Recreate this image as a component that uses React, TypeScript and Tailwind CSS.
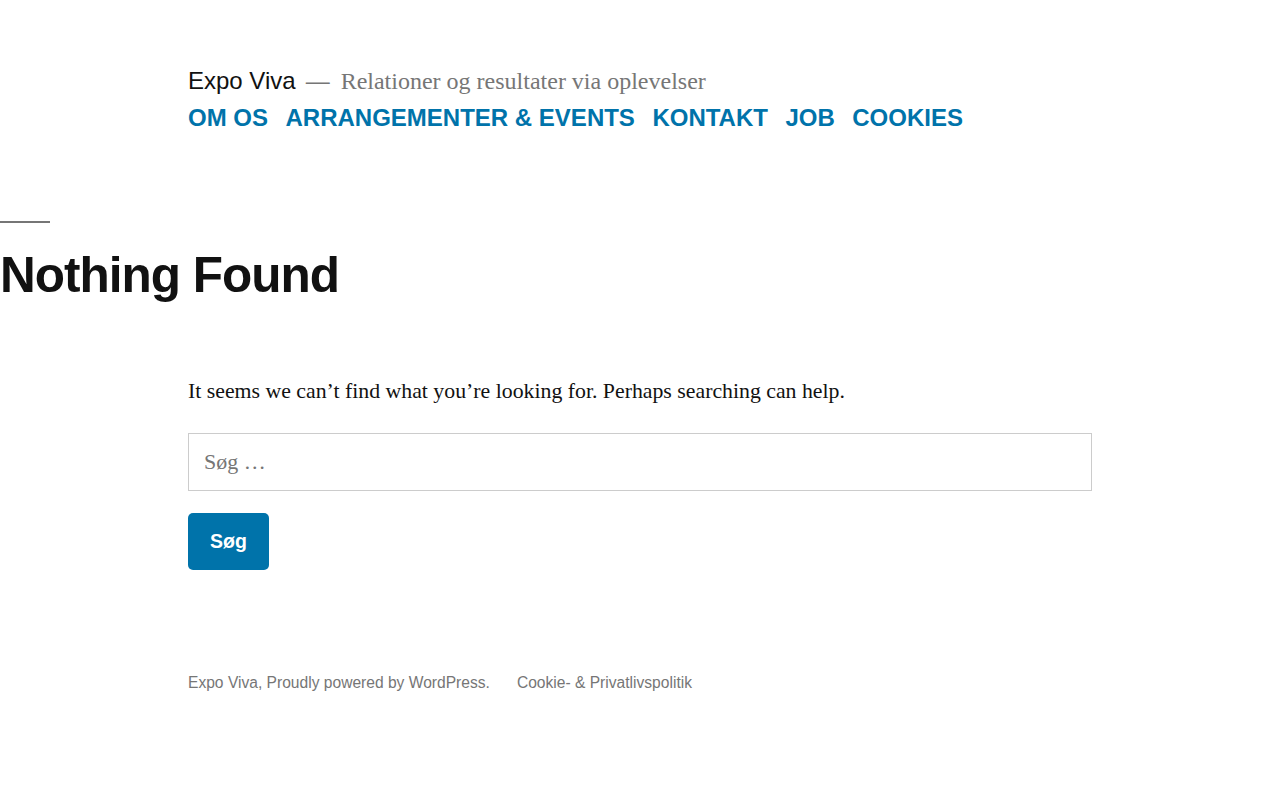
import React from "react";

const nav = ["OM OS", "ARRANGEMENTER & EVENTS", "KONTAKT", "JOB", "COOKIES"];

const sans = "font-['Liberation_Sans',Arial,sans-serif]";
const serif = "font-['Liberation_Serif','Times_New_Roman',serif]";

export default function App() {
  return (
    <div className="bg-white min-h-screen w-[1280px] pb-[107px]">
      {/* Header */}
      <header className="pt-[67px] px-[188px]">
        <div className="h-[28px] flex items-center whitespace-nowrap">
          <span className={`${sans} text-[24px] text-[#111]`}>Expo Viva</span>
          <span className={`${sans} text-[24px] text-[#767676] ml-[10px] mr-[11px]`}>—</span>
          <span className={`${serif} text-[24px] text-[#767676]`}>Relationer og resultater via oplevelser</span>
        </div>
        <nav className="mt-[9px] h-[28px] flex items-center gap-[17.5px] whitespace-nowrap">
          {nav.map((n) => (
            <a key={n} href="#" className={`${sans} text-[24px] font-bold text-[#0073aa]`}>
              {n}
            </a>
          ))}
        </nav>
      </header>

      {/* Page title */}
      <section className="mt-[89px]">
        <div className="w-[50px] h-[2px] bg-[#767676]" />
        <h1 className={`${sans} mt-[22px] h-[60px] flex items-center text-[49.5px] font-bold tracking-[-0.02em] text-[#111]`}>
          Nothing Found
        </h1>
      </section>

      {/* Content */}
      <main className="px-[188px]">
        <p className={`${serif} mt-[71px] h-[30px] flex items-center text-[21.8px] text-[#111]`}>
          It seems we can’t find what you’re looking for. Perhaps searching can help.
        </p>
        <form className="mt-[27px]" onSubmit={(e) => e.preventDefault()}>
          <input
            type="search"
            placeholder="Søg …"
            className={`${serif} block w-full h-[58px] border border-[#ccc] px-[15px] text-[22px] text-[#111] placeholder:text-[#767676] outline-none`}
          />
          <button
            type="submit"
            className={`${sans} mt-[22px] w-[81px] h-[57px] rounded-[5px] bg-[#0073aa] text-white text-[19.5px] font-bold`}
          >
            Søg
          </button>
        </form>
      </main>

      {/* Footer */}
      <footer className={`${sans} px-[188px] mt-[103px] h-[20px] flex items-center gap-[27px] text-[15.6px] text-[#767676]`}>
        <span>Expo Viva, Proudly powered by WordPress.</span>
        <a href="#">Cookie- &amp; Privatlivspolitik</a>
      </footer>
    </div>
  );
}
